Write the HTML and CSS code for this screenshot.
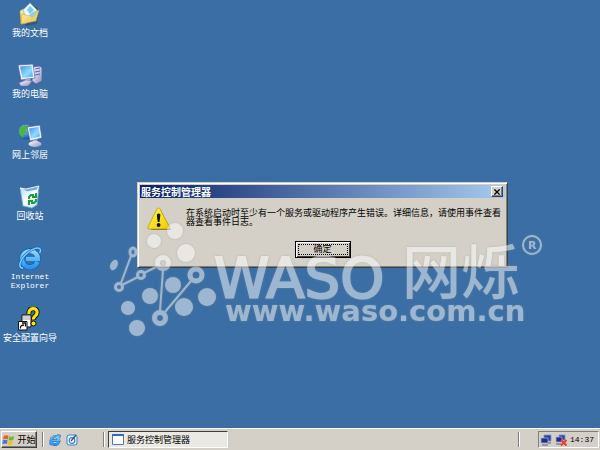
FILE: index.html
```html
<!DOCTYPE html>
<html lang="zh-CN">
<head>
<meta charset="utf-8">
<meta name="viewport" content="width=device-width, initial-scale=1">
<title>服务控制管理器</title>
<link rel="stylesheet" href="styles.css">
</head>
<body>
<svg width="0" height="0" class="defs" aria-hidden="true">
  <defs>
    <linearGradient id="folder" x1="0" y1="0" x2="1" y2="1"><stop offset="0" stop-color="#fff3ae"/><stop offset="1" stop-color="#e9bd3c"/></linearGradient>
    <linearGradient id="screen" x1="0" y1="0" x2="1" y2="1"><stop offset="0" stop-color="#3f8fe8"/><stop offset=".6" stop-color="#8fdcff"/><stop offset="1" stop-color="#3ba2ee"/></linearGradient>
    <linearGradient id="metal" x1="0" y1="0" x2="1" y2="1"><stop offset="0" stop-color="#fff"/><stop offset="1" stop-color="#8e8fc4"/></linearGradient>
    <linearGradient id="bin" x1="0" y1="0" x2="1" y2="1"><stop offset="0" stop-color="#a9dcf8"/><stop offset=".5" stop-color="#fff"/><stop offset="1" stop-color="#b5d6ee"/></linearGradient>
    <radialGradient id="globe" cx=".4" cy=".3" r=".7"><stop offset="0" stop-color="#9bd4ff"/><stop offset="1" stop-color="#1450b4"/></radialGradient>
    <linearGradient id="ie" x1="0" y1="0" x2="0" y2="1"><stop offset="0" stop-color="#8ad8ff"/><stop offset="1" stop-color="#2b94ee"/></linearGradient>
    <linearGradient id="warn" x1="0" y1="0" x2="1" y2="1"><stop offset="0" stop-color="#ffff40"/><stop offset="1" stop-color="#f2c800"/></linearGradient>
    <symbol id="ie-mark" viewBox="0 0 24 24">
      <path d="M19.500 16A8 8 0 1 1 20 13H8" fill="none" stroke="#0c5cb8" stroke-width="5.600"/>
      <path d="M19.500 16A8 8 0 1 1 20 13H8" fill="none" stroke="url(#ie)" stroke-width="4.400"/>
      <path d="M5 22C-3 22 5 7 17 2.400 21.500 1 24 3 21.500 7" fill="none" stroke="#0f62b8" stroke-width="2.600"/>
      <path d="M5 22C-3 22 5 7 17 2.400 21.500 1 24 3 21.500 7" fill="none" stroke="#7cccff" stroke-width="1.500"/>
    </symbol>
  </defs>
</svg>

<main class="desktop">
  <nav class="shortcuts" aria-label="桌面">
    <a class="shortcut" href="#docs">
      <svg viewBox="0 0 24 24" aria-hidden="true">
        <path d="M6 9 13 2 19 6 21 9 19 22 7 24Z" fill="#1d3f68" opacity=".5"/>
        <path d="M2 9 5 7 8 8 9 21 3 22Z" fill="url(#folder)" stroke="#c79f35" stroke-width=".6"/>
        <path d="M5 8 12 1 19 8 14 15 8 16Z" fill="#e9f8ff" stroke="#7fbce0" stroke-width=".7"/>
        <path d="M9 8 12 4 16 8 12 12Z" fill="#7ccbf3"/>
        <path d="M3 22 4 12 11 14 14 11 21 8 18 19Z" fill="url(#folder)" stroke="#d1a53b" stroke-width=".6"/>
        <path d="M11 13 14 16 19 11 17 9Z" fill="#83cbe9" opacity=".8"/>
      </svg>
      <span>我的文档</span>
    </a>
    <a class="shortcut" href="#computer">
      <svg viewBox="0 0 24 24" aria-hidden="true">
        <path d="M15 4 22 3 24 5V18L18 21 14 18Z" fill="url(#metal)" stroke="#54599b" stroke-width=".7"/>
        <path d="M17 6 22 5M17 9 22 8M17 12 22 11" stroke="#5a62ad" stroke-width="1"/>
        <path d="M0 2 15 1 17 15 3 17Z" fill="#f0f1ff" stroke="#5566a0" stroke-width=".7"/>
        <path d="M2 3.500 13.500 2.500 15 13.500 4.500 15Z" fill="url(#screen)"/>
        <path d="M7 16 12 15 13 19H8Z" fill="#a3a6ce"/>
        <path d="M1 20 8 17 14 18 10 23 3 23Z" fill="url(#metal)" stroke="#7779ab" stroke-width=".5"/>
      </svg>
      <span>我的电脑</span>
    </a>
    <a class="shortcut" href="#network">
      <svg viewBox="0 0 24 24" aria-hidden="true">
        <circle cx="8" cy="8" r="7.500" fill="url(#globe)"/>
        <path d="M2 4 7 1 11 3 8 6 10 8 6 10 5 14 1 10Z" fill="#49b83c"/>
        <path d="M9 3 22 1 24 14 12 17Z" fill="#eef1ff" stroke="#3b5e9c" stroke-width=".7"/>
        <path d="M11 4.500 20.500 3 22 12.500 13 14.500Z" fill="url(#screen)"/>
        <path d="M15 16 19 15 20 19H16Z" fill="#a6a8cc"/>
        <ellipse cx="17" cy="20" rx="6.500" ry="3" fill="url(#metal)"/>
      </svg>
      <span>网上邻居</span>
    </a>
    <a class="shortcut" href="#recycle">
      <svg viewBox="0 0 24 24" aria-hidden="true">
        <path d="M2 3 9 5 21 2 19 20 14 23 5 21Z" fill="url(#bin)" stroke="#6ba5d3" stroke-width=".8"/>
        <path d="M2 3 8 4 21 1 19 5 9 7Z" fill="#6faedd" stroke="#f1faff" stroke-width=".9"/>
        <path d="M11 14V12L13 10H16M18 8V12H14M18 14V16L16 18H13M11 20V16H15" fill="none" stroke="#19a036" stroke-width="2"/>
      </svg>
      <span>回收站</span>
    </a>
    <a class="shortcut" href="#ie">
      <svg viewBox="0 0 24 24" aria-hidden="true"><use href="#ie-mark"/></svg>
      <span class="latin">Internet Explorer</span>
    </a>
    <a class="shortcut" href="#security">
      <svg viewBox="0 0 24 24" aria-hidden="true">
        <path d="M4 8H13V20H4Z" fill="#fff" stroke="#111" stroke-width="1"/>
        <path d="M5 10H12M5 12H12" stroke="#888" stroke-width=".8"/>
        <path d="M11 7C10 0 20 0 19 6 19 9 15 9 15.500 13" fill="none" stroke="#111" stroke-width="5"/>
        <path d="M11 7C10 0 20 0 19 6 19 9 15 9 15.500 12.500" fill="none" stroke="#ffe600" stroke-width="3.200"/>
        <circle cx="15.500" cy="16.500" r="2.500" fill="#ffe600" stroke="#111"/>
        <path d="M.5 14.500H9V23H.5Z" fill="#fff" stroke="#111"/>
        <path d="M2.500 21.500C2 19 4 18 6 18M4 16H7.500V19.500" fill="none" stroke="#111" stroke-width="1.300"/>
      </svg>
      <span>安全配置向导</span>
    </a>
  </nav>

  <section class="dialog" role="dialog" aria-labelledby="dialog-title">
    <header class="titlebar">
      <h1 id="dialog-title">服务控制管理器</h1>
      <button class="close" type="button" aria-label="关闭">
        <svg viewBox="0 0 7 7" aria-hidden="true"><path d="M.5 .5 6.500 6.500M6.500 .5.5 6.500" stroke="#000" stroke-width="1.500"/></svg>
      </button>
    </header>
    <div class="message">
      <svg class="warning" viewBox="0 0 24 24" aria-hidden="true">
        <path d="M13 2 24 23H4Z" fill="#77746e"/>
        <path d="M11.500 1Q12.500 1 13 2L22.500 20Q23 22 21 22H2Q0 22 1 20L10 2Q10.500 1 11.500 1Z" fill="url(#warn)" stroke="#b99200" stroke-width=".7"/>
        <path d="M9.800 7.500Q11.600 5.500 13.400 7.500L12.500 15H10.700Z" fill="#111"/>
        <circle cx="11.600" cy="18" r="1.900" fill="#111"/>
      </svg>
      <p>在系统启动时至少有一个服务或驱动程序产生错误。详细信息，请使用事件查看器查看事件日志。</p>
    </div>
    <div class="actions"><button class="confirm" type="button">确定</button></div>
  </section>

  <svg class="watermark" viewBox="108 220 440 118" aria-hidden="true">
    <g class="mark-lines"><path d="M131 256 121 283M122 285 138 277M144 273 156 267M163 270 160 311M165 312 191 281"/></g>
    <g class="mark">
      <circle cx="175" cy="231" r="8"/><circle cx="154" cy="241" r="7"/><circle cx="186" cy="253" r="9"/>
      <ellipse cx="114" cy="265" rx="3.500" ry="5.500" transform="rotate(25 114 265)"/>
      <circle cx="173" cy="285" r="8"/><circle cx="150" cy="296" r="8"/><circle cx="207" cy="297" r="9"/>
      <circle cx="128" cy="308" r="7"/><circle cx="184" cy="307" r="9"/><circle cx="137" cy="328" r="8"/>
    </g>
    <g class="mark-rings">
      <ellipse cx="133" cy="252" rx="3" ry="4" stroke-width="3"/><circle cx="141" cy="275" r="3.500" stroke-width="3"/>
      <circle cx="119" cy="287" r="3.500" stroke-width="3"/><circle cx="163" cy="263" r="5.500" stroke-width="5"/>
      <circle cx="196" cy="275" r="6" stroke-width="5"/><circle cx="160" cy="318" r="5.500" stroke-width="5"/>
      <circle cx="532" cy="245" r="9" stroke-width="2"/>
    </g>
    <g class="mark">
      <text class="brand" x="214" y="297">WASO</text>
      <text class="brand-cn" x="402" y="294">网烁</text>
      <text class="site" x="225" y="321">www.waso.com.cn</text>
      <text class="registered" x="528" y="249">R</text>
    </g>
  </svg>
</main>

<footer class="taskbar">
  <button class="start" type="button">
    <svg viewBox="0 0 14 12" aria-hidden="true">
      <path d="M2 1.500Q4.500 0 7 1.500L6.200 5.500Q3.800 4 1.200 5.500Z" fill="#ef5a28"/>
      <path d="M7.800 2Q10.300 3.300 13 1.800L12.200 5.800Q9.500 7.200 7 6Z" fill="#70b82c"/>
      <path d="M1 6.300Q3.600 5 6 6.300L5.200 10.300Q3 9 .2 10.300Z" fill="#3f78d8"/>
      <path d="M6.800 6.800Q9.300 8 12 6.700L11.200 10.700Q8.500 12 6 10.800Z" fill="#f4c219"/>
    </svg>
    开始
  </button>
  <i class="grip"></i>
  <div class="quick">
    <button type="button" aria-label="Internet Explorer"><svg viewBox="0 0 24 24" aria-hidden="true"><use href="#ie-mark"/></svg></button>
    <button type="button" aria-label="显示桌面">
      <svg viewBox="0 0 12 12" aria-hidden="true">
        <rect x="1" y="1" width="10" height="10" rx="2" fill="#e9f5ff" stroke="#3b83c8"/>
        <circle cx="6" cy="6.500" r="2.800" fill="#fff" stroke="#3b83c8" stroke-width="1.200"/>
        <path d="M5 7 10 1" stroke="#244e96" stroke-width="1.300"/>
      </svg>
    </button>
  </div>
  <i class="grip grip-tasks"></i>
  <button class="task" type="button" aria-pressed="true">
    <svg viewBox="0 0 12 11" aria-hidden="true"><path d="M.5.5H11.500V10.500H.5Z" fill="#fff" stroke="#4f7ab8"/><path d="M0 0H12V2H0Z" fill="#2e6cc4"/></svg>
    服务控制管理器
  </button>
  <i class="grip grip-tray"></i>
  <div class="tray">
    <svg viewBox="0 0 12 12" aria-hidden="true">
      <path d="M4 1H11V7H4Z" fill="#2945a0" stroke="#8793bd" stroke-width=".8"/><path d="M1 4H8V9H1Z" fill="#1b2f86" stroke="#a5b0d4" stroke-width=".8"/><path d="M2 11H8M8 9H11" stroke="#555c83" stroke-width="1.200"/>
    </svg>
    <svg viewBox="0 0 12 12" aria-hidden="true">
      <path d="M4 1H10V6H4Z" fill="#2945a0" stroke="#8793bd" stroke-width=".8"/><path d="M1 3H7V8H1Z" fill="#1b2f86" stroke="#a5b0d4" stroke-width=".8"/><path d="M1 10H6" stroke="#555c83"/>
      <path d="M6 6 11.500 11.500M11.500 6 6 11.500" stroke="#e8402a" stroke-width="2"/>
    </svg>
    <time datetime="14:37">14:37</time>
  </div>
</footer>
</body>
</html>
```
FILE: styles.css
```css
* {
  box-sizing: border-box;
}

:root {
  --blue: #3a6ea5;
  --face: #d4d0c8;
  --shadow: #808080;
  --dark: #404040;
}

body {
  margin: 0;
  min-height: 100vh;
  display: flex;
  flex-direction: column;
  background: var(--blue);
  color: #000;
  font: 9px/9px "Noto Sans CJK SC", sans-serif;
}

button {
  margin: 0;
  padding: 0;
  border: 0;
  background: none;
  color: inherit;
  font: inherit;
}

svg {
  display: block;
  flex: none;
}

.defs {
  position: absolute;
}

.desktop {
  position: relative;
  flex: 1;
}

.shortcuts {
  display: grid;
  grid-auto-rows: 61px;
  justify-items: center;
  width: 60px;
  padding-top: 2px;
}

.shortcut {
  display: flex;
  flex-direction: column;
  align-items: center;
  gap: 2px;
  color: #fff;
  text-align: center;
  text-decoration: none;
  white-space: nowrap;
}

.shortcut svg {
  width: 24px;
  height: 24px;
}

.shortcut .latin {
  width: 48px;
  font-family: "Liberation Mono", monospace;
  font-size: 8px;
  white-space: normal;
}

/* Open window on the desktop */
.dialog {
  position: absolute;
  left: 137px;
  top: 182px;
  width: 371px;
  padding: 2px;
  background: var(--face);
  border: 1px solid;
  border-color: var(--face) var(--dark) var(--dark) var(--face);
  box-shadow: inset 1px 1px #fff, inset -1px -1px var(--shadow);
}

.titlebar {
  display: flex;
  align-items: center;
  justify-content: space-between;
  height: 13px;
  padding: 0 2px 0 1px;
  background: linear-gradient(90deg, #0a246a, #a6caf0);
  color: #fff;
}

.titlebar h1 {
  margin: 0;
  font-size: 10px;
  line-height: 12px;
  font-weight: 700;
}

.close,
.confirm,
.start {
  background: var(--face);
  border: 1px solid;
  border-color: #fff var(--dark) var(--dark) #fff;
  box-shadow: inset -1px -1px var(--shadow);
}

.close {
  display: grid;
  place-items: center;
  width: 12px;
  height: 11px;
}

.close svg {
  width: 6px;
  height: 6px;
}

.message {
  display: flex;
  gap: 15px;
  padding: 9px 4px 0 7px;
}

.message p {
  flex: 1;
  margin: 1px 0 0;
}

.warning {
  width: 24px;
  height: 24px;
}

.actions {
  display: flex;
  justify-content: center;
  padding: 10px 0 7px;
}

.confirm {
  width: 56px;
  height: 17px;
  padding-bottom: 2px;
  border-color: #000;
  box-shadow: inset 1px 1px #fff, inset -1px -1px var(--dark);
  outline: 1px dotted #000;
  outline-offset: -4px;
}

/* Translucent brand overlay */
.watermark {
  position: absolute;
  left: 108px;
  top: 220px;
  width: 440px;
  height: 118px;
  pointer-events: none;
  opacity: .5;
  filter: drop-shadow(0 0 1px #8f9a8c);
}

.mark {
  fill: #fff;
}

.mark-lines,
.mark-rings {
  fill: none;
  stroke: #fff;
}

.mark-lines {
  stroke-width: 2px;
}

.brand,
.site,
.registered {
  font-family: "DejaVu Sans", sans-serif;
  font-weight: 700;
}

.brand {
  font-size: 56px;
  font-weight: 400;
  stroke: #fff;
  stroke-width: 2px;
}

.brand-cn {
  font-family: "Noto Sans CJK SC", sans-serif;
  font-size: 59px;
  font-weight: 500;
}

.site {
  font-size: 29px;
}

.registered {
  font-size: 11px;
}

.taskbar {
  display: flex;
  align-items: center;
  height: 22px;
  padding: 0 1px;
  background: var(--face);
  border-top: 1px solid #fff;
  white-space: nowrap;
}

.start {
  display: flex;
  align-items: center;
  justify-content: center;
  gap: 2px;
  width: 36px;
  height: 17px;
}

.start svg {
  width: 13px;
  height: 12px;
}

.grip {
  width: 2px;
  height: 15px;
  margin: 0 5px;
  border-left: 1px solid var(--shadow);
  border-right: 1px solid #fff;
}

.quick {
  display: flex;
  gap: 5px;
}

.quick svg {
  width: 12px;
  height: 12px;
}

.grip-tasks {
  margin: 0 3px 0 25px;
}

.task {
  display: flex;
  align-items: center;
  gap: 3px;
  width: 120px;
  height: 17px;
  padding: 0 3px;
  background: #ebe9e4;
  border: 1px solid;
  border-color: var(--dark) #fff #fff var(--dark);
}

.task svg {
  width: 12px;
  height: 11px;
}

.grip-tray {
  margin-left: auto;
  margin-right: 18px;
}

.tray {
  display: flex;
  align-items: center;
  gap: 3px;
  height: 17px;
  padding: 0 4px 0 1px;
  border: 1px solid;
  border-color: var(--shadow) #fff #fff var(--shadow);
}

.tray svg {
  width: 12px;
  height: 12px;
}

.tray time {
  font-family: "Liberation Mono", monospace;
  font-size: 8px;
}
```
